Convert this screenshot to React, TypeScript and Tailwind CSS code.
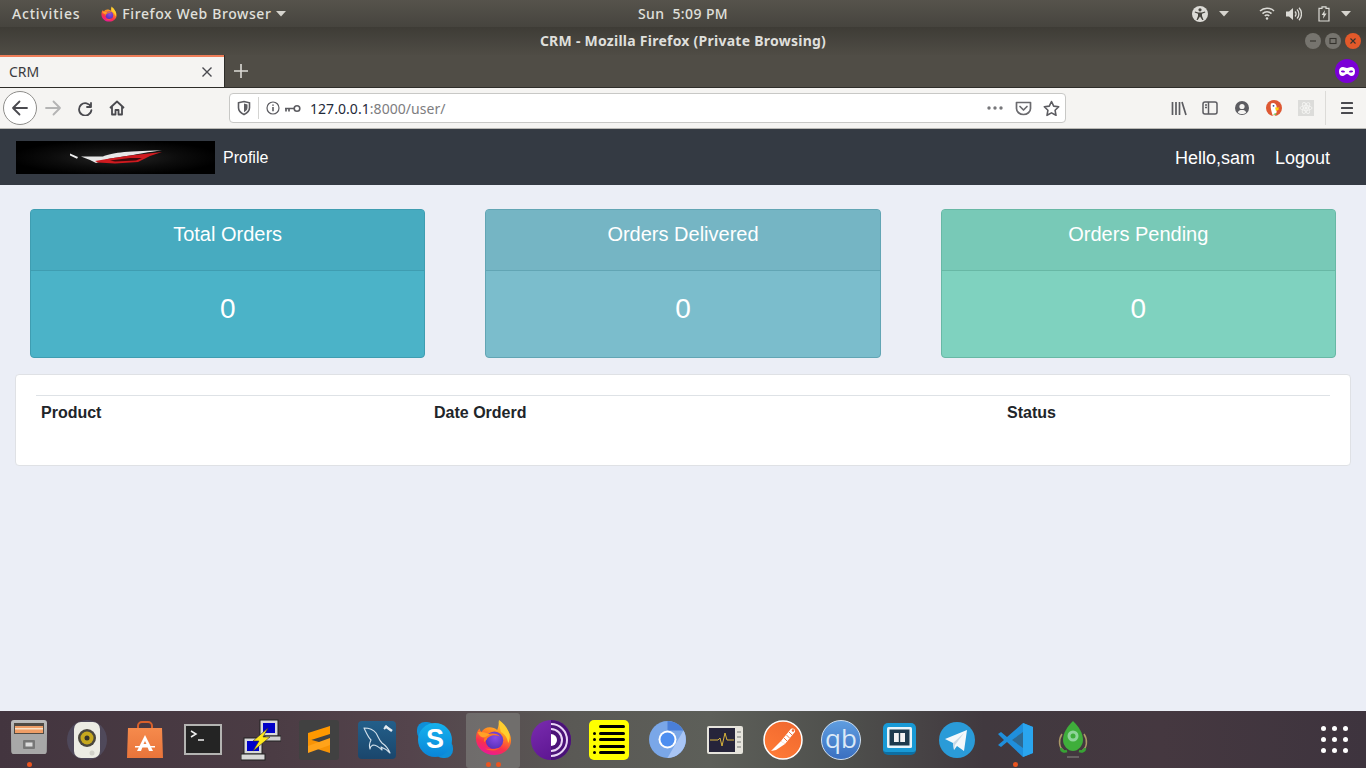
import React from "react";

const Ubuntu = "font-['Noto_Sans','Open_Sans',sans-serif]";

function Caret({ className = "" }: { className?: string }) {
  return (
    <svg width="10" height="6" viewBox="0 0 10 6" className={className}>
      <path d="M0 0h10L5 5.500z" fill="#d6d4ce" />
    </svg>
  );
}

function FirefoxIcon({ size }: { size: number }) {
  const id = `ff${size}`;
  return (
    <svg width={size} height={size} viewBox="0 0 40 40">
      <defs>
        <linearGradient id={id} x1="0.75" y1="0" x2="0.35" y2="1">
          <stop offset="0" stopColor="#ffd83a" />
          <stop offset="0.4" stopColor="#ff8a1f" />
          <stop offset="0.72" stopColor="#f9304c" />
          <stop offset="1" stopColor="#e9189a" />
        </linearGradient>
        <radialGradient id={`${id}p`} cx="0.55" cy="0.35" r="0.8">
          <stop offset="0" stopColor="#8a4ce6" />
          <stop offset="1" stopColor="#4d2bb0" />
        </radialGradient>
      </defs>
      <path
        d="M25 1c1 3 3 5 6 7 5 4 8 9 8 15 0 9-8 16-18 16C10 39 1 31 1 21c0-4 1-8 4-11 0 2 1 3 2 4 2-3 5-5 9-5 3 0 6 1 8 3 2-5 2-9 1-11z"
        fill={`url(#${id})`}
      />
      <path d="M26 1c4 3 8 7 10 12 2 4 2 8 0 13-1-5-3-9-8-12-1-4-2-9-2-13z" fill="#ffce2e" />
      <circle cx="21" cy="23" r="9.500" fill={`url(#${id}p)`} />
      <path d="M10 25c-1-5 2-8 6-9 4-1 9 0 11 3-4-2-8-2-11 0-2 1-3 2-3 3z" fill="#ff7a21" />
      <path d="M3 14c4 0 9 0 13 3l-6 3c-3 0-6-2-7-6z" fill="#ffa126" />
      <path d="M11 32c4 3 12 3 16-1-4 1-11 2-16 1z" fill="#ff5a30" />
    </svg>
  );
}

function Shield() {
  return (
    <svg width="16" height="16" viewBox="0 0 16 16" fill="none">
      <path d="M2.500 2.800 8 1.500l5.500 1.300v5c0 3-2.400 5.300-5.500 6.700-3.100-1.400-5.500-3.700-5.500-6.700z" stroke="#5c5c61" strokeWidth="1.600" />
      <path d="M8 3.500 11.500 4.400v3.300c0 2-1.500 3.400-3.500 4.500z" fill="#5c5c61" />
    </svg>
  );
}

function BrowserNav() {
  const c = "#4a4a4f";
  return (
    <div className="h-[41px] bg-[#f5f4f2] border-b border-[#b9b8b4] flex items-center shrink-0">
      <div className="ml-[3px] w-[34px] h-[34px] rounded-full border border-[#8e8d8a] bg-white flex items-center justify-center">
        <svg width="18" height="16" viewBox="0 0 18 16" fill="none" stroke={c} strokeWidth="1.800" strokeLinecap="round" strokeLinejoin="round">
          <path d="M16 8H2M8.500 1.500 2 8l6.500 6.500" />
        </svg>
      </div>
      <svg width="18" height="16" viewBox="0 0 18 16" fill="none" stroke="#b4b4b4" strokeWidth="1.800" strokeLinecap="round" strokeLinejoin="round" className="ml-[7px]">
        <path d="M2 8h14M9.500 1.500 16 8l-6.500 6.500" />
      </svg>
      <svg width="16" height="16" viewBox="0 0 16 16" fill="none" stroke={c} strokeWidth="1.800" strokeLinecap="round" className="ml-[15px]">
        <path d="M14 3v4h-4M14 7a6.200 6.200 0 1 0 .4 3.200" strokeLinejoin="round" />
      </svg>
      <svg width="16" height="16" viewBox="0 0 16 16" fill="none" stroke={c} strokeWidth="1.800" strokeLinejoin="round" className="ml-[16px]">
        <path d="M1 8 8 1.500 15 8M3 6.500V14.500h3.500V10h3v4.500H13V6.500" />
      </svg>

      <div className="ml-[104px] w-[837px] h-[30px] bg-white border border-[#c8c8c6] rounded-[4px] flex items-center">
        <div className="ml-[6px]"><Shield /></div>
        <div className="ml-[6px] w-px h-[22px] bg-[#d4d4d2]" />
        <svg width="14" height="14" viewBox="0 0 14 14" fill="none" className="ml-[7px]" stroke="#5c5c61">
          <circle cx="7" cy="7" r="6" strokeWidth="1.200" />
          <path d="M7 6v4.200M7 3.400v1.400" strokeWidth="1.600" />
        </svg>
        <svg width="17" height="9" viewBox="0 0 17 9" fill="none" className="ml-[4px]" stroke="#5c5c61">
          <circle cx="13" cy="4.500" r="2.800" strokeWidth="1.600" />
          <path d="M10 4.500H1M2 4.500v3M5 4.500v3" strokeWidth="1.700" />
        </svg>
        <span className="ml-[9px] text-[14px] tracking-[0.05px] font-['Noto_Sans',sans-serif] text-[#1f2a3a] whitespace-nowrap">
          127.0.0.1<span className="text-[#7d7d80]">:8000/user/</span>
        </span>
        <div className="flex-1" />
        <svg width="16" height="4" viewBox="0 0 16 4" fill="#77777a">
          <circle cx="2" cy="2" r="1.700" /><circle cx="8" cy="2" r="1.700" /><circle cx="14" cy="2" r="1.700" />
        </svg>
        <svg width="17" height="15" viewBox="0 0 17 15" fill="none" stroke="#6a6a6e" strokeWidth="1.700" className="ml-[12px]" strokeLinejoin="round">
          <path d="M1.500 1.500h14v6a7 6 0 0 1-14 0z" />
          <path d="M5 5.500 8.500 9 12 5.500" strokeLinecap="round" />
        </svg>
        <svg width="17" height="17" viewBox="0 0 17 17" fill="none" stroke="#5c5c61" strokeWidth="1.600" strokeLinejoin="round" className="ml-[11px] mr-[5px]">
          <path d="m8.500 1.500 2.200 4.600 5 .7-3.600 3.500.9 5-4.500-2.400L4 15.300l.9-5L1.300 6.800l5-.7z" />
        </svg>
      </div>

      <svg width="16" height="15" viewBox="0 0 16 15" fill="none" stroke="#5c5c61" strokeWidth="1.700" className="ml-[105px]">
        <path d="M1.500 1v13M5 1v13M8.500 1v13M11 1l4 13" />
      </svg>
      <svg width="16" height="14" viewBox="0 0 16 14" fill="none" stroke="#5c5c61" strokeWidth="1.500" className="ml-[15px]">
        <rect x="1" y="1" width="14" height="12" rx="2" />
        <path d="M6.500 1v12" />
        <path d="M3 4h2M3 6.500h2" />
      </svg>
      <svg width="14" height="14" viewBox="0 0 14 14" className="ml-[17px]">
        <circle cx="7" cy="7" r="7" fill="#5c5c61" />
        <circle cx="7" cy="5.500" r="2.600" fill="#f5f4f2" />
        <path d="M2.800 11.500C3.500 9.500 5 9 7 9s3.500.5 4.200 2.500C10 12.800 8.500 13 7 13s-3-.2-4.200-1.500z" fill="#f5f4f2" />
      </svg>
      <svg width="16" height="16" viewBox="0 0 16 16" className="ml-[17px]">
        <circle cx="8" cy="8" r="8" fill="#de5833" />
        <path d="M5 3.500c2-1.200 5-.5 5.500 2.500.3 2-.2 4 .2 6L9 15.800H6.800C5.500 12 4 7 5 3.500z" fill="#fff" />
        <path d="M9 7.500h4.500L12 9.200h1.600L10 11z" fill="#fdd20a" />
        <path d="M7 14.500 9.500 13l1 2z" fill="#65bc46" />
        <circle cx="7.500" cy="5.800" r="0.900" fill="#2d4f8e" />
      </svg>
      <div className="ml-[16px] w-[16px] h-[16px] bg-[#dcdcda] flex items-center justify-center">
        <svg width="14" height="14" viewBox="0 0 14 14" fill="none" stroke="#f4f4f2" strokeWidth="0.900">
          <ellipse cx="7" cy="7" rx="6" ry="2.400" />
          <ellipse cx="7" cy="7" rx="6" ry="2.400" transform="rotate(60 7 7)" />
          <ellipse cx="7" cy="7" rx="6" ry="2.400" transform="rotate(120 7 7)" />
          <circle cx="7" cy="7" r="1.200" fill="#f4f4f2" />
        </svg>
      </div>
      <div className="ml-[11px] w-px h-[34px] bg-[#dcdbd8]" />
      <svg width="14" height="12" viewBox="0 0 14 12" fill="#4a4a4f" className="ml-[14px]">
        <rect x="1" y="0" width="12" height="2" rx="0.600" />
        <rect x="1" y="5" width="12" height="2" rx="0.600" />
        <rect x="1" y="10" width="12" height="2" rx="0.600" />
      </svg>
    </div>
  );
}

function WinButton({ bg, children }: { bg: string; children: React.ReactNode }) {
  return (
    <div className={`w-4 h-4 rounded-full flex items-center justify-center ${bg}`}>
      <svg width="10" height="10" viewBox="0 0 10 10" fill="none" stroke="#35332e" strokeWidth="1.100">{children}</svg>
    </div>
  );
}

function Chrome() {
  return (
    <>
      {/* GNOME top bar */}
      <div className={`h-[27px] shrink-0 bg-[linear-gradient(#56534c,#46443e)] grid grid-cols-[1fr_auto_1fr] items-center text-[#e0e0dc] text-[14px] font-medium tracking-[0.6px] ${Ubuntu}`}>
        <div className="flex items-center">
          <span className="ml-[12px] tracking-[0.8px]">Activities</span>
          <span className="ml-[21px]"><FirefoxIcon size={16} /></span>
          <span className="ml-[5px]">Firefox Web Browser</span>
          <Caret className="ml-[5px]" />
        </div>
        <div className="whitespace-pre tracking-[0.4px]">Sun  5:09 PM</div>
        <div className="flex items-center justify-end">
          <svg width="16" height="16" viewBox="0 0 16 16">
            <circle cx="8" cy="8" r="8" fill="#dcdbd6" />
            <circle cx="8" cy="3.800" r="1.600" fill="#46443e" />
            <path d="M3 5.600 6.300 6.500h3.400L13 5.600l.3 1L10 7.800V10l1.500 4h-1.200L8 10.500 5.700 14H4.500L6 10V7.800L2.700 6.600z" fill="#46443e" />
          </svg>
          <Caret className="ml-[11px]" />
          <svg width="16" height="13" viewBox="0 0 16 13" fill="none" stroke="#dcdbd6" strokeWidth="1.500" className="ml-[30px]">
            <path d="M1 4a10 10 0 0 1 14 0M3.500 6.600a6.500 6.500 0 0 1 9 0M5.800 9a3 3 0 0 1 4.400 0" />
            <circle cx="8" cy="11.500" r="1.200" fill="#dcdbd6" stroke="none" />
          </svg>
          <svg width="16" height="14" viewBox="0 0 16 14" fill="#dcdbd6" className="ml-[11px]">
            <path d="M0 4.500h3L7 1v12L3 9.500H0z" />
            <path d="M9 4.500a3.500 3.500 0 0 1 0 5M11 2.500a6.300 6.300 0 0 1 0 9M13 .8a9 9 0 0 1 0 12.400" fill="none" stroke="#dcdbd6" strokeWidth="1.300" />
          </svg>
          <svg width="12" height="16" viewBox="0 0 12 16" fill="none" className="ml-[16px]">
            <path d="M4 .8h4v1.500h3V15H1V2.300h3z" stroke="#dcdbd6" strokeWidth="1.200" />
            <path d="M7 4 3.600 9h2L5 12.800 8.600 7.600H6.400z" fill="#dcdbd6" />
          </svg>
          <Caret className="ml-[11px] mr-[15px]" />
        </div>
      </div>
      {/* window title bar */}
      <div className={`h-[28px] shrink-0 bg-[linear-gradient(#3e3c36,#4f4c45)] grid grid-cols-[1fr_auto_1fr] items-center ${Ubuntu}`}>
        <div />
        <div className="text-[#dfdfdb] text-[14px] tracking-[0.25px] font-bold mb-[2px]">CRM - Mozilla Firefox (Private Browsing)</div>
        <div className="flex justify-end items-center gap-1 pr-[5px]">
          <WinButton bg="bg-[#76746e]"><path d="M2 5h6" /></WinButton>
          <WinButton bg="bg-[#76746e]"><rect x="2" y="2.500" width="6" height="5" /></WinButton>
          <WinButton bg="bg-[#e2592a]"><path d="m2.500 2.500 5 5M7.500 2.500l-5 5" /></WinButton>
        </div>
      </div>
      {/* tab strip */}
      <div className="h-[33px] shrink-0 bg-[#504d46] flex items-stretch border-b border-[#2e2d29]">
        <div className={`w-[224px] bg-[#f5f4f2] border-t-2 border-[#ee7d58] flex items-center justify-between pl-[9px] pr-[11px] ${Ubuntu}`}>
          <span className="text-[14px] text-[#3b3b3f] mb-[2px]">CRM</span>
          <svg width="12" height="12" viewBox="0 0 12 12" stroke="#4a4a4f" strokeWidth="1.400">
            <path d="m1.500 1.500 9 9M10.500 1.500l-9 9" />
          </svg>
        </div>
        <div className="w-px bg-[#2e2d29]" />
        <div className="ml-[9px] flex items-center">
          <svg width="14" height="14" viewBox="0 0 14 14" stroke="#dcdbd6" strokeWidth="1.600">
            <path d="M7 0v14M0 7h14" />
          </svg>
        </div>
        <div className="flex-1" />
        <div className="flex items-center pr-[7px]">
          <div className="w-[24px] h-[24px] rounded-full bg-[#7a00d6] flex items-center justify-center">
            <svg width="16" height="9" viewBox="0 0 16 9">
              <path fillRule="evenodd" d="M4 0c1.500 0 2.500 1 4 1s2.500-1 4-1c2.500 0 4 1.500 4 4.500S14.500 9 12.500 9C10.500 9 9.500 7 8 7S5.500 9 3.500 9C1.500 9 0 7.500 0 4.500S1.500 0 4 0zM3 3.500c-.8 0-1 .8-1 1.200 0 .3 1.500.8 2.500.8S6 5 6 4.700c0-.6-1.500-1.200-3-1.200zm10 0c-1.500 0-3 .6-3 1.200 0 .3.500.8 1.500.8s2.500-.5 2.500-.8c0-.4-.2-1.200-1-1.200z" fill="#fff" />
            </svg>
          </div>
        </div>
      </div>
      <BrowserNav />
    </>
  );
}

function Logo() {
  return (
    <div className="w-[199px] h-[33px] bg-[radial-gradient(ellipse_at_50%_50%,#262626_0%,#0c0c0c_45%,#000_75%)] flex items-center justify-center">
      <svg width="92" height="14" viewBox="0 0 92 14">
        <path d="M0 3.500 8 7 7 8.800 0 5.500z" fill="#eeeeee" />
        <path d="M11 6.500 33 6.500C42 3 52 1 92 .5 78 2 68 4 60 5.500 50 7 44 8 38 9L26 13 20 10z" fill="#e8e8e8" />
        <path d="M25 11 40 8.500 60 5.500 92 2 80 6 68 12 45 13.500 28 12.500z" fill="#cf1a1f" />
        <path d="M40 10.500 60 8 72 8 66 10.500 45 11.500z" fill="#3a0a0c" />
      </svg>
    </div>
  );
}

function StatCard({ title, head, body, border }: { title: string; head: string; body: string; border: string }) {
  return (
    <div className="px-[30px]">
      <div className={`h-[149px] border rounded-[4px] overflow-hidden text-white text-center flex flex-col ${border} ${body}`}>
        <div className={`h-[61px] border-b text-[20px] leading-[24px] pt-[12px] ${border} ${head}`}>{title}</div>
        <div className="flex-1 flex items-center justify-center text-[28px] leading-none pb-[10px]">0</div>
      </div>
    </div>
  );
}

function Dock() {
  const dot = "w-[5px] h-[5px] rounded-full bg-[#e95420]";
  const slot = "w-[58px] h-[57px] relative flex items-center justify-center shrink-0";
  const dotPos = "absolute bottom-[1px] left-0 right-0 flex justify-center gap-[5px]";
  return (
    <div className="h-[57px] shrink-0 bg-[linear-gradient(90deg,#43353f_0%,#4b3c44_20%,#54444c_30%,#5a5955_42%,#5d5f59_52%,#4e4f4c_62%,#41393f_72%,#453840_85%,#3e343e_100%)] flex items-center pl-0 font-['Liberation_Sans',sans-serif]">
      {/* Files */}
      <div className={slot}>
        <svg width="36" height="36" viewBox="0 0 36 36" className="mb-[6px]">
          <defs>
            <linearGradient id="cab" x1="0" y1="0" x2="0" y2="1">
              <stop offset="0" stopColor="#bdbdbd" />
              <stop offset="1" stopColor="#8d8d8d" />
            </linearGradient>
          </defs>
          <rect x="0" y="1" width="36" height="34" rx="3" fill="url(#cab)" />
          <rect x="3" y="4" width="30" height="12" fill="#4f4a44" />
          <rect x="4" y="7" width="28" height="7" fill="#ee9d66" />
          <rect x="4" y="9" width="28" height="1.500" fill="#f8e0c4" />
          <rect x="1" y="15" width="34" height="20" rx="1.500" fill="#a8a8a8" />
          <rect x="12" y="21" width="12" height="9" rx="1" fill="#777" />
          <rect x="14.500" y="23.500" width="7" height="4" fill="#dcdcdc" />
        </svg>
        <div className={dotPos}><div className={dot} /></div>
      </div>
      {/* Speaker */}
      <div className={slot}>
        <div className="w-[40px] h-[40px] rounded-full bg-[#6b7da8]/25 flex items-center justify-center">
          <svg width="26" height="36" viewBox="0 0 26 36">
            <rect width="26" height="36" rx="7" fill="#ececE4" />
            <circle cx="13" cy="16" r="9" fill="#4a473e" />
            <circle cx="13" cy="16" r="6.500" fill="#c6a81e" />
            <circle cx="13" cy="16" r="2.500" fill="#35332b" />
            <circle cx="18" cy="31" r="2.500" fill="#d2d2ca" />
          </svg>
        </div>
      </div>
      {/* Software */}
      <div className={slot}>
        <svg width="36" height="38" viewBox="0 0 36 38">
          <defs>
            <linearGradient id="sw" x1="0" y1="0" x2="0" y2="1">
              <stop offset="0" stopColor="#f58a4c" />
              <stop offset="1" stopColor="#e9743a" />
            </linearGradient>
          </defs>
          <path d="M11 8V5a4 4 0 0 1 4-4h6a4 4 0 0 1 4 4v3" fill="none" stroke="#d9602b" strokeWidth="2" />
          <path d="M1 7h34l1 30H0z" fill="url(#sw)" />
          <path d="M18 14 10 30h4l1.500-4h5L22 30h4zM18 20l1.500 3h-3z" fill="#fff" />
          <rect x="8" y="25" width="20" height="1.500" fill="#fff" />
        </svg>
      </div>
      {/* Terminal */}
      <div className={slot}>
        <div className="w-[38px] h-[31px] bg-[#242424] border-2 border-[#b4b4b2] flex items-start p-[3px]">
          <svg width="24" height="14" viewBox="0 0 24 14" fill="none" stroke="#eee" strokeWidth="1.500">
            <path d="m2 2 5 3-5 3M9 11h6" />
          </svg>
        </div>
      </div>
      {/* PuTTY */}
      <div className={slot}>
        <svg width="40" height="42" viewBox="0 0 40 42">
          <rect x="19" y="1" width="18" height="16" fill="#d8d8d8" stroke="#222" />
          <rect x="22" y="4" width="12" height="10" fill="#0000c8" />
          <rect x="24" y="17" width="16" height="5" fill="#cfcfcf" stroke="#222" />
          <rect x="3" y="19" width="18" height="16" fill="#d8d8d8" stroke="#222" />
          <rect x="6" y="22" width="12" height="10" fill="#0000c8" />
          <rect x="0" y="35" width="24" height="6" fill="#d8d8d8" stroke="#222" />
          <path d="M27 9 12 22l6 0-6 10 17-14-7 0z" fill="#ffe81c" stroke="#333" strokeWidth="0.600" />
        </svg>
      </div>
      {/* Sublime */}
      <div className={slot}>
        <div className="w-[40px] h-[40px] rounded-[3px] bg-[#414141] flex items-center justify-center">
          <svg width="22" height="27" viewBox="0 0 22 27">
            <path d="M22 0v8L0 15V7z" fill="#ff9800" />
            <path d="M0 13l22 6v8L0 20z" fill="#f89406" />
            <path d="M22 12v7L0 27v-7z" fill="#ffa31a" />
          </svg>
        </div>
      </div>
      {/* MySQL */}
      <div className={slot}>
        <div className="w-[38px] h-[38px] rounded-[4px] bg-[linear-gradient(#235f8a,#1a466c)] flex items-center justify-center">
          <svg width="36" height="36" viewBox="0 0 36 36" fill="none" stroke="#d4e2ec" strokeWidth="1.100" strokeLinejoin="round">
            <path d="M5 6c5 0 9 1 12 5 2 3 3 7 6 10 3 2 6 5 8 10-3-3-6-5-9-6 1 1 1 2 1 3-3-3-6-5-9-5-2 1-3 2-3 4-1-3 0-7 1-9-3-3-5-8-7-12z" />
            <path d="M26 4l7 5" strokeWidth="2.600" stroke="#e4ecf2" />
            <path d="M25 7l3-3" strokeWidth="2" stroke="#e4ecf2" />
          </svg>
        </div>
      </div>
      {/* Skype */}
      <div className={slot}>
        <div className="relative w-[36px] h-[36px]">
          <div className="absolute left-0 top-0 w-[18px] h-[18px] rounded-[8px] bg-[#0f8fd8]" />
          <div className="absolute right-0 bottom-0 w-[18px] h-[18px] rounded-[8px] bg-[#0f8fd8]" />
          <div className="absolute inset-[1px] rounded-full bg-[linear-gradient(#15b2ee,#0a85d8)] flex items-center justify-center text-white font-bold text-[27px] leading-none">S</div>
        </div>
      </div>
      {/* Firefox */}
      <div className={slot}>
        <div className="absolute left-[2px] right-[2px] top-[2px] bottom-0 rounded-[3px] bg-[#7a7a78]/70" />
        <div className="relative mb-[4px] ml-[1px]"><FirefoxIcon size={37} /></div>
        <div className={dotPos}><div className={dot} /><div className={dot} /></div>
      </div>
      {/* Tor */}
      <div className={slot}>
        <svg width="40" height="40" viewBox="0 0 40 40" fill="none">
          <defs>
            <linearGradient id="tor" x1="0" y1="0" x2="0.6" y2="1">
              <stop offset="0" stopColor="#7a2cb0" />
              <stop offset="1" stopColor="#5c1590" />
            </linearGradient>
          </defs>
          <circle cx="20" cy="20" r="20" fill="url(#tor)" />
          <path d="M20 0a20 20 0 0 1 0 40z" fill="#4a1278" />
          <path d="M20 14a6 6 0 0 1 0 12z" fill="#fff" />
          <path d="M20 9a11 11 0 0 1 0 22M20 4a16 16 0 0 1 0 32" stroke="#e9d6f5" strokeWidth="2" />
        </svg>
      </div>
      {/* Notes */}
      <div className={slot}>
        <div className="w-[40px] h-[40px] rounded-[5px] bg-[#ffff00] flex flex-col items-center justify-center gap-[3.500px]">
          {[0, 1, 2, 3, 4].map((i) => (
            <div key={i} className="flex items-center gap-[3px]">
              <div className={`w-[3px] h-[3px] rounded-full ${i === 0 ? "bg-transparent" : "bg-black"}`} />
              <div className="w-[26px] h-[3px] rounded-full bg-black" />
            </div>
          ))}
        </div>
      </div>
      {/* Chromium */}
      <div className={slot}>
        <svg width="37" height="37" viewBox="0 0 37 37">
          <circle cx="18.500" cy="18.500" r="18.500" fill="#7aa7e8" />
          <path d="M18.500 0a18.500 18.500 0 0 1 16 9.500H18.500z" fill="#4a7fd8" />
          <path d="M34.500 9.500A18.500 18.500 0 0 1 18.500 37l8-14z" fill="#a8c5f5" />
          <circle cx="18.500" cy="18.500" r="9" fill="#fff" />
          <circle cx="18.500" cy="18.500" r="7" fill="#4d8ef0" />
        </svg>
      </div>
      {/* Monitor */}
      <div className={slot}>
        <svg width="36" height="28" viewBox="0 0 36 28">
          <rect width="36" height="28" rx="2" fill="#e6e4dc" />
          <rect x="2" y="2" width="26" height="24" fill="#26243a" />
          <path d="M3 14h8l2-2 2 8 3-13 2 7h7" fill="none" stroke="#d9b43a" strokeWidth="1" />
          <path d="M30 6h4M30 11h4M30 16h4M30 21h4" stroke="#9c9c98" strokeWidth="1.500" />
        </svg>
      </div>
      {/* Postman */}
      <div className={slot}>
        <svg width="40" height="40" viewBox="0 0 40 40">
          <defs>
            <linearGradient id="pm" x1="0.8" y1="0" x2="0.2" y2="1">
              <stop offset="0" stopColor="#f0682f" />
              <stop offset="1" stopColor="#ff7b36" />
            </linearGradient>
          </defs>
          <circle cx="20" cy="20" r="19" fill="url(#pm)" stroke="#fff" strokeWidth="1.500" />
          <path d="M10 29 18 21l4 3-9 6-5 1z" fill="#fff" />
          <path d="M18 21 27 10c2-3 6-1 5 2l-1 1-9 11z" fill="#fff" />
          <path d="M21 18l3 3M23.500 15l3 3M26 12l3 3" stroke="#f0682f" strokeWidth="0.900" />
          <circle cx="30" cy="10.500" r="1.300" fill="#f0682f" />
        </svg>
      </div>
      {/* qBittorrent */}
      <div className={slot}>
        <div className="w-[40px] h-[40px] rounded-full border border-[#cfe0f2] bg-[linear-gradient(#5f9de0,#3a6fc0)] flex items-center justify-center text-[#dbe9f7] text-[26px] leading-none font-['Open_Sans',sans-serif] pb-[3px]">
          qb
        </div>
      </div>
      {/* Brackets */}
      <div className={slot}>
        <div className="w-[33px] h-[32px] rounded-[5px] bg-[#189ad6] border-b-[3px] border-[#0e6fa3] flex items-center justify-center mb-[2px]">
          <svg width="25" height="21" viewBox="0 0 25 21">
            <rect x="0" y="0" width="25" height="21" rx="1.500" fill="#e8f5fb" />
            <rect x="2.500" y="2.500" width="20" height="16" fill="#1d3a4d" />
            <path d="M7 6h4.800v9H7zM13.200 6H18v9h-4.800z" fill="#f2f2f2" />
          </svg>
        </div>
      </div>
      {/* Telegram */}
      <div className={slot}>
        <svg width="36" height="36" viewBox="0 0 36 36">
          <circle cx="18" cy="18" r="18" fill="#2a9bd8" />
          <path d="M6 17 28 8l-3 21-7-5-3 4-1-7z" fill="#f4f8fb" />
          <path d="m14 21 11-10-9 12-1 5z" fill="#c9d9e6" />
        </svg>
      </div>
      {/* VS Code */}
      <div className={slot}>
        <svg width="36" height="36" viewBox="0 0 36 36">
          <path d="M26 1 36 5v26l-10 4L10 20l-6 5-3-2 6-5-6-6 3-2 6 5z" fill="#1f8fdc" />
          <path d="M26 1 36 5v26l-10 4z" fill="#2aa5ee" />
          <path d="M26 10v16l-11-8z" fill="#3b4a55" fillOpacity="0.550" />
        </svg>
        <div className={dotPos}><div className={dot} /></div>
      </div>
      {/* Rocket */}
      <div className={slot}>
        <svg width="30" height="40" viewBox="0 0 30 40" fill="none">
          <path d="M4 14C0 20 1 28 6 31M26 14c4 6 3 14-2 17" stroke="#ac9a68" strokeWidth="1.500" />
          <path d="M15 1c6 6 10 12 10 19 0 6-5 11-10 11S5 26 5 20C5 13 9 7 15 1z" fill="#3fae3b" />
          <circle cx="15" cy="16" r="5.500" fill="#8fd49a" />
          <circle cx="15" cy="16" r="2.500" fill="#3fae3b" />
          <path d="M3 28c0 3 3 4 6 3M27 28c0 3-3 4-6 3" stroke="#37a334" strokeWidth="2.500" />
          <path d="M9 37h12" stroke="#8b8a85" strokeWidth="1" />
        </svg>
      </div>
      <div className="flex-1" />
      <div className="grid grid-cols-3 gap-x-[6px] gap-y-[6px] mr-[18px]">
        {[0, 1, 2, 3, 4, 5, 6, 7, 8].map((i) => (
          <div key={i} className="w-[5px] h-[5px] rounded-full bg-white" />
        ))}
      </div>
    </div>
  );
}

export default function App() {
  return (
    <div className="w-[1366px] h-[768px] overflow-hidden flex flex-col bg-[#ebeef6] font-['Liberation_Sans',Arial,sans-serif]">
      <Chrome />
      <nav className="h-[56px] shrink-0 bg-[#343a43] flex items-center text-white pl-[16px] pr-[36px]">
        <Logo />
        <span className="ml-[8px] text-[16px] mt-[1px]">Profile</span>
        <div className="flex-1" />
        <span className="text-[18px] mt-[2px]">Hello,sam</span>
        <span className="ml-[20px] text-[18px] mt-[2px]">Logout</span>
      </nav>
      <main className="flex-1 min-h-0">
        <div className="grid grid-cols-3 pt-[24px]">
          <StatCard title="Total Orders" head="bg-[#47abc0]" body="bg-[#4bb3c8]" border="border-[#3f9db1]" />
          <StatCard title="Orders Delivered" head="bg-[#75b5c4]" body="bg-[#7bbdcc]" border="border-[#62a5b4]" />
          <StatCard title="Orders Pending" head="bg-[#78c9b7]" body="bg-[#7fd2bf]" border="border-[#68b8a5]" />
        </div>
        <div className="mx-[15px] mt-[16px] h-[92px] bg-white border border-[#dfe1e5] rounded-[4px] px-[20px] pt-[20px]">
          <div className="border-t border-[#dee2e6] grid grid-cols-[393px_573px_1fr] pl-[5px] pt-[8px] text-[16px] font-bold text-[#212529] leading-[18px]">
            <span>Product</span>
            <span>Date Orderd</span>
            <span>Status</span>
          </div>
        </div>
      </main>
      <Dock />
    </div>
  );
}
